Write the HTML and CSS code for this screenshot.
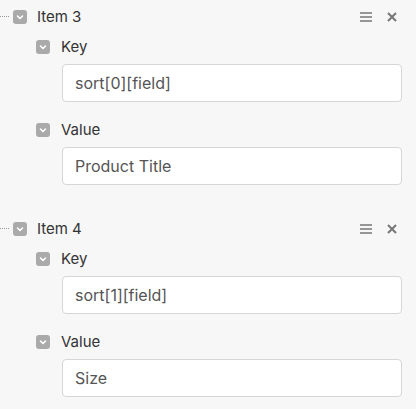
FILE: index.html
```html
<!DOCTYPE html>
<html>
<head>
<meta charset="utf-8">
<link rel="stylesheet" href="styles.css">
</head>
<body>
<div class="list">
  <div class="item">
    <div class="item-head">
      <span class="connector"></span>
      <span class="toggle"><svg viewBox="0 0 14 14" width="14" height="14"><path d="M4.5 6 L7 8.5 L9.5 6" fill="none" stroke="#fff" stroke-width="1.6" stroke-linecap="round" stroke-linejoin="round"/></svg></span>
      <span class="item-title">Item 3</span>
      <span class="actions">
        <svg class="icon" viewBox="0 0 12 12" width="12" height="12"><path d="M0 2h12M0 6h12M0 10h12" stroke="#777" stroke-width="1.6"/></svg>
        <svg class="icon" viewBox="0 0 10 10" width="10" height="10"><path d="M1 1L9 9M9 1L1 9" stroke="#777" stroke-width="2"/></svg>
      </span>
    </div>
    <div class="fields">
      <div class="field-label">
        <span class="toggle"><svg viewBox="0 0 14 14" width="14" height="14"><path d="M4.5 6 L7 8.5 L9.5 6" fill="none" stroke="#fff" stroke-width="1.6" stroke-linecap="round" stroke-linejoin="round"/></svg></span>
        <span>Key</span>
      </div>
      <div class="input">sort[0][field]</div>
      <div class="field-label">
        <span class="toggle"><svg viewBox="0 0 14 14" width="14" height="14"><path d="M4.5 6 L7 8.5 L9.5 6" fill="none" stroke="#fff" stroke-width="1.6" stroke-linecap="round" stroke-linejoin="round"/></svg></span>
        <span>Value</span>
      </div>
      <div class="input">Product Title</div>
    </div>
  </div>
  <div class="item">
    <div class="item-head">
      <span class="connector"></span>
      <span class="toggle"><svg viewBox="0 0 14 14" width="14" height="14"><path d="M4.5 6 L7 8.5 L9.5 6" fill="none" stroke="#fff" stroke-width="1.6" stroke-linecap="round" stroke-linejoin="round"/></svg></span>
      <span class="item-title">Item 4</span>
      <span class="actions">
        <svg class="icon" viewBox="0 0 12 12" width="12" height="12"><path d="M0 2h12M0 6h12M0 10h12" stroke="#777" stroke-width="1.6"/></svg>
        <svg class="icon" viewBox="0 0 10 10" width="10" height="10"><path d="M1 1L9 9M9 1L1 9" stroke="#777" stroke-width="2"/></svg>
      </span>
    </div>
    <div class="fields">
      <div class="field-label">
        <span class="toggle"><svg viewBox="0 0 14 14" width="14" height="14"><path d="M4.5 6 L7 8.5 L9.5 6" fill="none" stroke="#fff" stroke-width="1.6" stroke-linecap="round" stroke-linejoin="round"/></svg></span>
        <span>Key</span>
      </div>
      <div class="input">sort[1][field]</div>
      <div class="field-label">
        <span class="toggle"><svg viewBox="0 0 14 14" width="14" height="14"><path d="M4.5 6 L7 8.5 L9.5 6" fill="none" stroke="#fff" stroke-width="1.6" stroke-linecap="round" stroke-linejoin="round"/></svg></span>
        <span>Value</span>
      </div>
      <div class="input">Size</div>
    </div>
  </div>
</div>
</body>
</html>
```
FILE: styles.css
```css
html, body {
  margin: 0;
  padding: 0;
  background: #f7f7f7;
  font-family: Inter, "Noto Sans", sans-serif;
  font-size: 15px;
  color: #333;
}
.item {
  padding-bottom: 27px;
}
.item-head {
  display: flex;
  align-items: center;
  height: 33px;
}
.connector {
  width: 9px;
  border-top: 1px dotted #999;
  margin-right: 4px;
}
.toggle {
  display: inline-flex;
  width: 14px;
  height: 14px;
  border-radius: 3px;
  background: #aaa;
  flex: none;
}
.item-title {
  margin-left: 10px;
  flex: 1;
}
.actions {
  display: flex;
  align-items: center;
  gap: 15px;
  margin-right: 19px;
}
.icon {
  display: block;
}
.fields {
  padding-left: 36px;
  padding-right: 14px;
}
.field-label {
  display: flex;
  align-items: center;
  gap: 11px;
  height: 27px;
}
.input {
  margin: 4px 0 14px 26px;
  height: 38px;
  box-sizing: border-box;
  border: 1px solid #d6d6d6;
  border-radius: 4px;
  background: #fff;
  padding: 0 12px;
  display: flex;
  align-items: center;
  font-size: 16px;
  color: #555;
}
.fields .input:last-child {
  margin-bottom: 0;
}
```
